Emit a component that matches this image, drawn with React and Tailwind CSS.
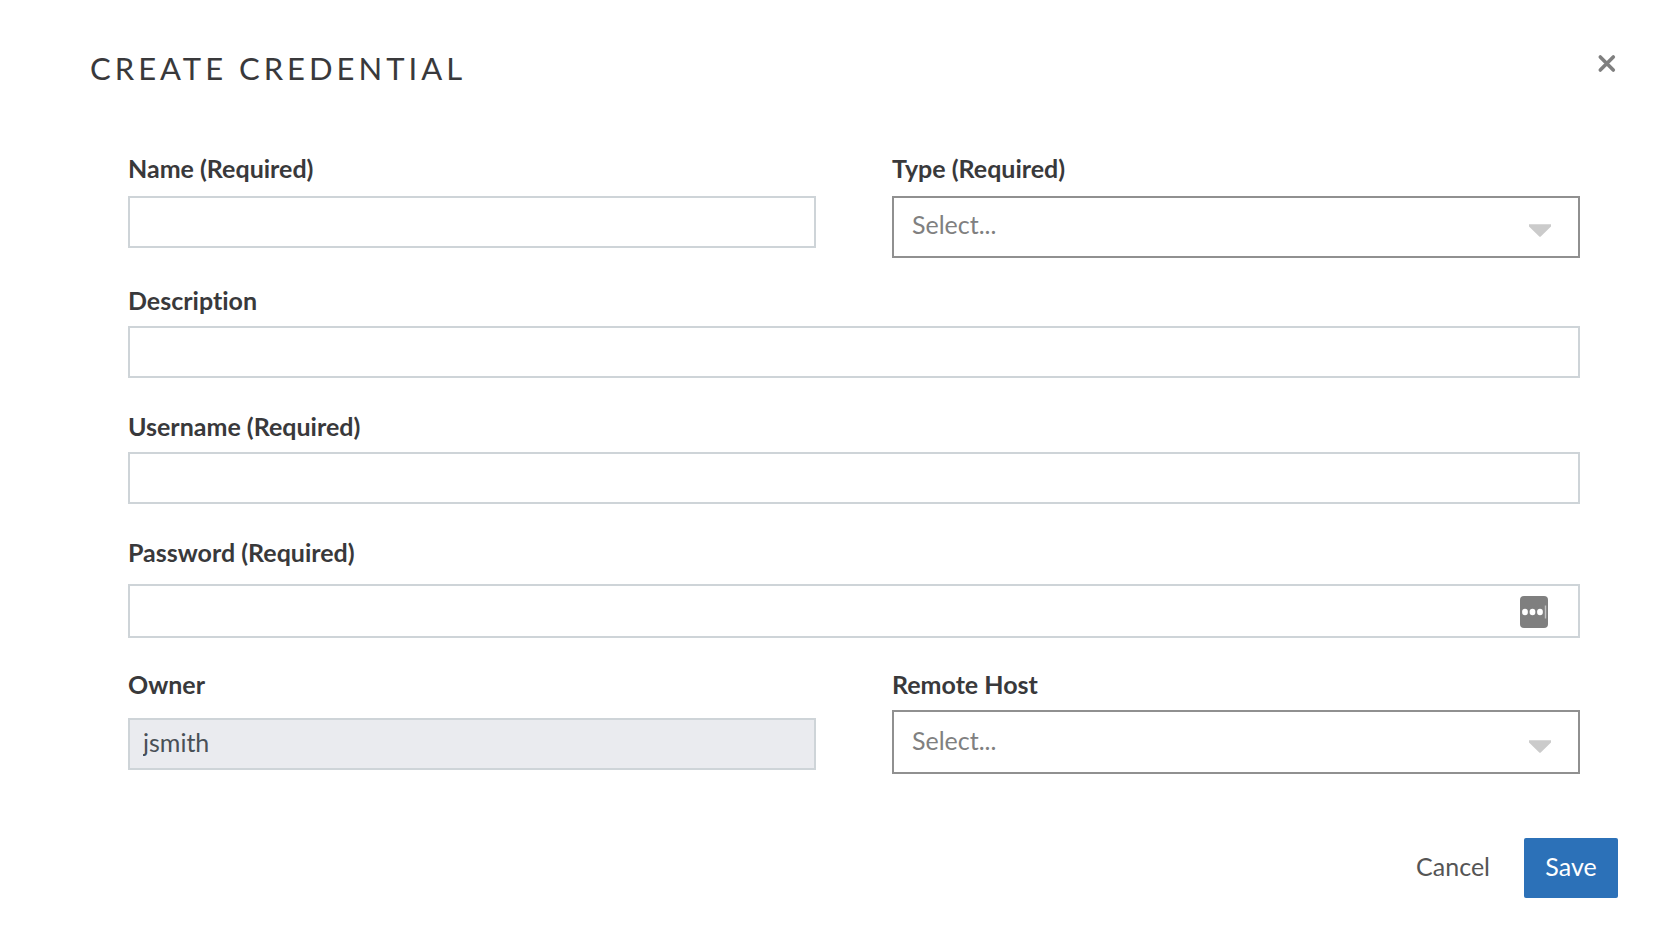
import { useState } from "react"

const inputClass = "block w-full border-2 border-[#ced4d8] bg-white px-3 text-[#495057] outline-none"

const Field = ({ id, label, labelGap = "mb-2.5", children }) => (
  <div>
    <label htmlFor={id} className={`block leading-8 font-bold text-[#39393b] ${labelGap}`}>
      {label}
    </label>
    {children}
  </div>
)

const SelectBox = ({ id, size = "h-16 pb-0.5", value, onChange }) => (
  <div className="relative">
    <select
      id={id}
      value={value}
      onChange={onChange}
      className={`block w-full appearance-none rounded-none border-2 border-[#909090] bg-white pr-16 pl-[18px] text-[#808080] outline-none ${size}`}
    >
      <option value="">Select...</option>
    </select>
    <svg
      className="pointer-events-none absolute right-7 bottom-5 h-[14px] w-6"
      viewBox="0 0 24 14"
      fill="#cbcbcb"
      aria-hidden="true"
    >
      <path d="M1 0.3h22v2.2L13 12.3q-1 1-2 0L1 2.5z" />
    </svg>
  </div>
)

const App = () => {
  const [form, setForm] = useState({
    name: "",
    type: "",
    description: "",
    username: "",
    password: "",
    remoteHost: "",
  })

  const update = (key) => (e) => setForm({ ...form, [key]: e.target.value })

  return (
    <div className="min-h-screen bg-white pt-12 pr-11 pb-11 pl-[90px] font-['Lato',sans-serif] text-[25px] [font-variant-ligatures:none]">
      <div className="flex items-start justify-between">
        <h1 className="text-[31px] leading-10 tracking-[4px] text-[#39393b] uppercase">Create Credential</h1>
        <button type="button" aria-label="Close" className="mt-1 flex h-6 w-6 items-center justify-center">
          <svg className="h-6 w-6" viewBox="0 0 24 24" stroke="#7f7f7f" strokeWidth="3.6" strokeLinecap="round">
            <path d="M6.3 5l13 13M19.3 5l-13 13" />
          </svg>
        </button>
      </div>

      <form className="mt-16" onSubmit={(e) => e.preventDefault()}>
        <div className="pr-[38px] pl-[38px]">
          <div className="mb-[26px] grid grid-cols-2 gap-x-[76px]">
            <Field id="name" label="Name (Required)" labelGap="mb-3">
              <input id="name" type="text" value={form.name} onChange={update("name")} className={`${inputClass} h-13`} />
            </Field>
            <Field id="type" label="Type (Required)" labelGap="mb-3">
              <SelectBox id="type" size="h-[62px] pb-1" value={form.type} onChange={update("type")} />
            </Field>
          </div>

          <div className="mb-8">
            <Field id="description" label="Description">
              <input
                id="description"
                type="text"
                value={form.description}
                onChange={update("description")}
                className={`${inputClass} h-13`}
              />
            </Field>
          </div>

          <div className="mb-8">
            <Field id="username" label="Username (Required)">
              <input
                id="username"
                type="text"
                value={form.username}
                onChange={update("username")}
                className={`${inputClass} h-13`}
              />
            </Field>
          </div>

          <div className="mb-[30px]">
            <Field id="password" label="Password (Required)" labelGap="mb-4">
              <div className="relative">
                <input
                  id="password"
                  type="password"
                  value={form.password}
                  onChange={update("password")}
                  className={`${inputClass} h-[54px]`}
                />
                {/* password manager badge */}
                <svg className="absolute top-3 right-8 h-8 w-7" viewBox="0 0 28 32" aria-hidden="true">
                  <rect width="28" height="32" rx="4" fill="#7f7f7f" />
                  <ellipse cx="5" cy="16" rx="2.9" ry="3.3" fill="#fff" />
                  <ellipse cx="12.5" cy="16" rx="2.9" ry="3.3" fill="#fff" />
                  <ellipse cx="20" cy="16" rx="2.9" ry="3.3" fill="#fff" />
                  <path d="M25.5 9.5v13" stroke="#c4c4c4" strokeWidth="1.4" />
                </svg>
              </div>
            </Field>
          </div>

          <div className="grid grid-cols-2 gap-x-[76px]">
            <Field id="owner" label="Owner" labelGap="mb-[18px]">
              <input
                id="owner"
                type="text"
                value="jsmith"
                readOnly
                className="block h-13 w-full border-2 border-[#ced4d8] bg-[#eaebef] px-[13px] pb-1 text-[#495057] outline-none"
              />
            </Field>
            <Field id="remoteHost" label="Remote Host">
              <SelectBox id="remoteHost" value={form.remoteHost} onChange={update("remoteHost")} />
            </Field>
          </div>
        </div>

        <div className="mt-16 flex items-center justify-end gap-[34px]">
          <button type="button" className="h-15 pb-0.5 text-[#555555]">
            Cancel
          </button>
          <button type="submit" className="h-15 w-[94px] rounded-xs bg-[#2c71b8] pb-0.5 text-white">
            Save
          </button>
        </div>
      </form>
    </div>
  )
}

export default App
